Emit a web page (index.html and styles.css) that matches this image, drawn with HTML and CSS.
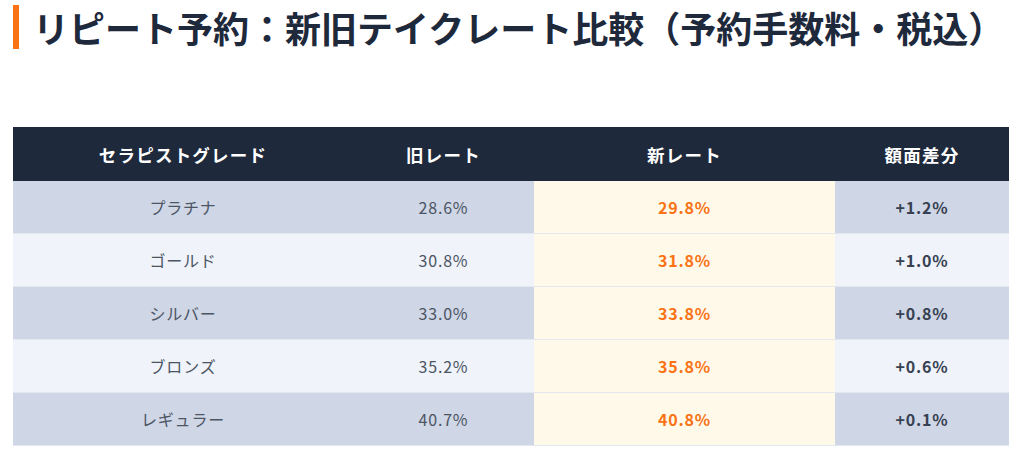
FILE: index.html
```html
<!DOCTYPE html>
<html lang="ja">
<head>
<meta charset="utf-8">
<link rel="stylesheet" href="styles.css">
</head>
<body>
<div class="page">
  <h1 class="title">リピート予約：新旧テイクレート比較（予約手数料・税込）</h1>
  <table class="rates">
    <colgroup>
      <col class="c1"><col class="c2"><col class="c3"><col class="c4">
    </colgroup>
    <thead>
      <tr><th>セラピストグレード</th><th>旧レート</th><th>新レート</th><th>額面差分</th></tr>
    </thead>
    <tbody>
      <tr><td>プラチナ</td><td>28.6%</td><td class="new">29.8%</td><td class="diff">+1.2%</td></tr>
      <tr><td>ゴールド</td><td>30.8%</td><td class="new">31.8%</td><td class="diff">+1.0%</td></tr>
      <tr><td>シルバー</td><td>33.0%</td><td class="new">33.8%</td><td class="diff">+0.8%</td></tr>
      <tr><td>ブロンズ</td><td>35.2%</td><td class="new">35.8%</td><td class="diff">+0.6%</td></tr>
      <tr><td>レギュラー</td><td>40.7%</td><td class="new">40.8%</td><td class="diff">+0.1%</td></tr>
    </tbody>
  </table>
</div>
</body>
</html>
```
FILE: styles.css
```css
html, body {
  margin: 0;
  padding: 0;
  background: #ffffff;
}
body {
  font-family: "Noto Sans CJK JP", "Noto Sans", sans-serif;
  color: #1e293b;
}
.page {
  padding: 5px 15px 0 13px;
}
.title {
  margin: 0;
  border-left: 6px solid #f97316;
  padding-left: 14px;
  height: 44px;
  display: flex;
  align-items: center;
  font-size: 36px;
  letter-spacing: 0;
  font-weight: 700;
  color: #1e293b;
  line-height: 44px;
  white-space: nowrap;
}
.rates {
  margin-top: 78px;
  width: 996px;
  border-collapse: collapse;
  table-layout: fixed;
}
.c1 { width: 340px; }
.c2 { width: 181px; }
.c3 { width: 301px; }
.c4 { width: 174px; }
.rates th {
  background: #1e293b;
  color: #ffffff;
  font-size: 17.5px;
  letter-spacing: 1.2px;
  font-weight: 700;
  height: 54px;
  padding: 0;
  text-align: center;
}
.rates td {
  height: 52px;
  padding: 0;
  text-align: center;
  font-size: 16px;
  letter-spacing: 0.8px;
  color: #4b5563;
  border-bottom: 1px solid #e3e8f0;
}
.rates tbody tr:nth-child(odd) td { background: #cfd6e6; }
.rates tbody tr:nth-child(even) td { background: #f0f3f9; }
.rates tbody tr td.new {
  background: #fef9e8;
  color: #f97316;
  font-weight: 700;
}
.rates td.diff {
  color: #374151;
  font-weight: 700;
}
```
